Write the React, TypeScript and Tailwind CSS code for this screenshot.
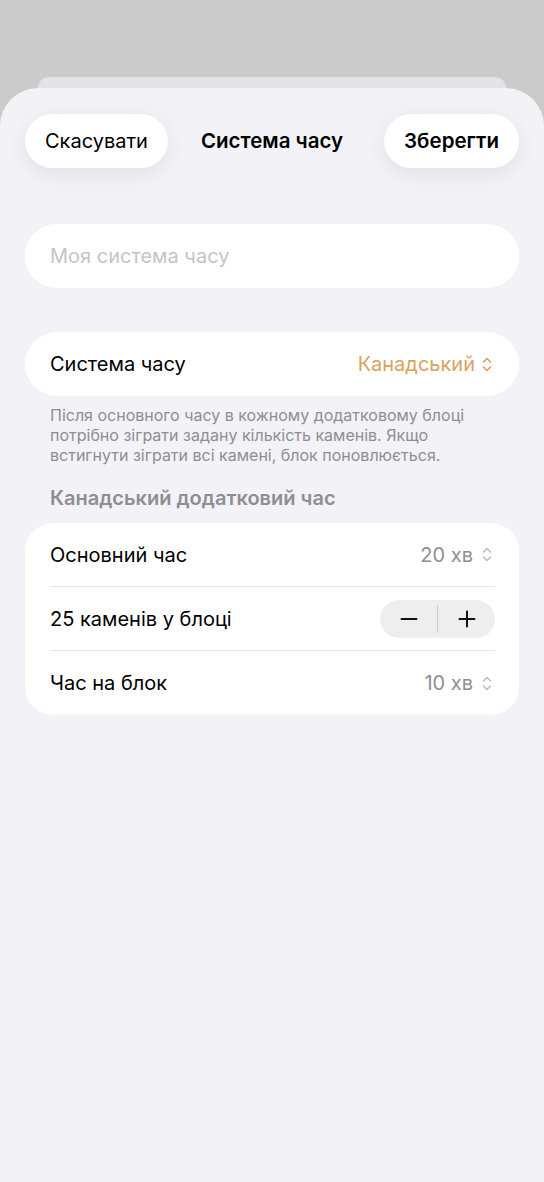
import React from "react";

const font = { fontFamily: "Inter, 'Noto Sans', sans-serif" };

function UpDown({ color }: { color: string }) {
  return (
    <svg width="10" height="17" viewBox="0 0 10 17" fill="none" stroke={color} strokeWidth="1.6" strokeLinecap="round" strokeLinejoin="round">
      <path d="M1.5 6 L5 2.5 L8.5 6" />
      <path d="M1.5 11 L5 14.5 L8.5 11" />
    </svg>
  );
}

function Stepper() {
  return (
    <div className="flex items-center h-[38px] w-[115px] rounded-full bg-[#eeeeef]">
      <button className="flex-1 flex items-center justify-center h-full">
        <svg width="18" height="18" viewBox="0 0 18 18" stroke="#111" strokeWidth="2" strokeLinecap="round">
          <path d="M1.5 9 H16.5" />
        </svg>
      </button>
      <div className="w-px h-[28px] bg-[#c9c9cd]" />
      <button className="flex-1 flex items-center justify-center h-full">
        <svg width="18" height="18" viewBox="0 0 18 18" stroke="#111" strokeWidth="2" strokeLinecap="round">
          <path d="M1.5 9 H16.5 M9 1.5 V16.5" />
        </svg>
      </button>
    </div>
  );
}

export default function App() {
  return (
    <div className="min-h-[1182px] bg-[#cbcbcb] flex flex-col pt-[77px] text-black" style={font}>
      {/* sheet stacked behind */}
      <div className="h-[11px] mx-[38px] rounded-t-[24px] bg-[#e3e3e6]" />

      <div className="flex-1 rounded-t-[38px] bg-[#f2f2f7] px-[25px] pt-[26px]">
        {/* nav bar */}
        <div className="flex items-center justify-between h-[54px]">
          <button className="h-[54px] px-[20px] rounded-full bg-white shadow-[0_6px_22px_rgba(0,0,0,0.08)] text-[20px]">
            Скасувати
          </button>
          <div className="text-[20.5px] font-semibold pr-[8px]">Система часу</div>
          <button className="h-[54px] px-[20px] rounded-full bg-white shadow-[0_6px_22px_rgba(0,0,0,0.08)] text-[20.5px] font-semibold">
            Зберегти
          </button>
        </div>

        {/* name field */}
        <div className="mt-[56px] h-[64px] rounded-full bg-white flex items-center px-[25px]">
          <input
            className="w-full bg-transparent outline-none text-[20px] placeholder:text-[#c4c4c7]"
            placeholder="Моя система часу"
          />
        </div>

        {/* time system select */}
        <div className="mt-[44px] h-[64px] rounded-full bg-white flex items-center justify-between pl-[25px] pr-[27px]">
          <span className="text-[20px]">Система часу</span>
          <span className="flex items-center gap-[7px] text-[20px] text-[#d8a35e]">
            Канадський
            <UpDown color="#d8a35e" />
          </span>
        </div>
        <p className="px-[25px] mt-[9px] text-[16px] leading-[20px] text-[#8e8e93]">
          Після основного часу в кожному додатковому блоці потрібно зіграти задану кількість каменів. Якщо встигнути зіграти всі камені, блок поновлюється.
        </p>

        {/* section */}
        <div className="px-[25px] mt-[21px] text-[20px] font-semibold text-[#8e8e93] leading-[24px]">
          Канадський додатковий час
        </div>
        <div className="mt-[13px] rounded-[28px] bg-white pl-[25px] pr-[24px]">
          <div className="h-[64px] flex items-center justify-between border-b border-[#e4e4e7] pr-[3px]">
            <span className="text-[20px]">Основний час</span>
            <span className="flex items-center gap-[9px] text-[20px] text-[#8e8e93]">
              20 хв
              <UpDown color="#bdbdc2" />
            </span>
          </div>
          <div className="h-[64px] flex items-center justify-between border-b border-[#e4e4e7]">
            <span className="text-[20px]">25 каменів у блоці</span>
            <Stepper />
          </div>
          <div className="h-[64px] flex items-center justify-between pr-[3px]">
            <span className="text-[20px]">Час на блок</span>
            <span className="flex items-center gap-[9px] text-[20px] text-[#8e8e93]">
              10 хв
              <UpDown color="#bdbdc2" />
            </span>
          </div>
        </div>
      </div>
    </div>
  );
}
